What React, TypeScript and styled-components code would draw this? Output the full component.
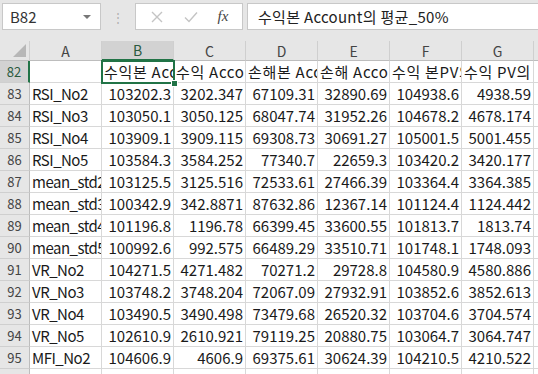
import { Fragment } from 'react';
import styled, { createGlobalStyle, css } from 'styled-components';

const GlobalStyle = createGlobalStyle`
  html, body { margin: 0; padding: 0; background: #ffffff; }
  body {
    font-family: "Noto Sans CJK KR", "Noto Sans", sans-serif;
    overflow: hidden;
  }
`

const Page = styled.div`
  width: 538px;
  height: 374px;
  overflow: hidden;
  background: #e6e6e6;
`

const FormulaBar = styled.div`
  display: flex;
  align-items: center;
  height: 41px;
  padding: 3px 0 11px 2px;
  box-sizing: border-box;
`

const NameBox = styled.div`
  width: 99px;
  height: 27px;
  box-sizing: border-box;
  background: #ffffff;
  border: 1px solid #c8c8c8;
  display: flex;
  align-items: center;
  padding-left: 7px;
  font-size: 15px;
  color: #333;
`

const DropArrow = styled.span`
  margin-left: auto;
  margin-right: 9px;
  width: 0;
  height: 0;
  border-left: 4px solid transparent;
  border-right: 4px solid transparent;
  border-top: 4px solid #777;
`

const Grip = styled.div`
  width: 34px;
  display: flex;
  justify-content: center;
  color: #b0b0b0;
  font-size: 12px;
  line-height: 1;
`

const FxBox = styled.div`
  width: 108px;
  height: 27px;
  box-sizing: border-box;
  background: #ffffff;
  border: 1px solid #c8c8c8;
  display: flex;
  align-items: center;
  justify-content: space-around;
  padding: 0 4px;
`

const Fx = styled.span`
  font-family: "Liberation Serif", serif;
  font-style: italic;
  font-size: 15px;
  color: #444;
`

const FormulaInput = styled.div`
  margin-left: 4px;
  flex: 1;
  height: 27px;
  box-sizing: border-box;
  background: #ffffff;
  border: 1px solid #c8c8c8;
  border-right: none;
  display: flex;
  align-items: center;
  padding-left: 10px;
  font-size: 15px;
  color: #222;
  white-space: nowrap;
  letter-spacing: 0.3px;
`

const Sheet = styled.div`
  position: relative;
  display: grid;
  grid-template-columns: 30px repeat(7, 72px) 1fr;
  grid-template-rows: 20px repeat(15, 22px);
  background: #ffffff;
`

const Corner = styled.div`
  position: relative;
  background: #e6e6e6;
  border-right: 1px solid #cfcfcf;
  border-bottom: 1px solid #bdbdbd;
  &::after {
    content: '';
    position: absolute;
    right: 3px;
    bottom: 3px;
    width: 0;
    height: 0;
    border-left: 13px solid transparent;
    border-bottom: 13px solid #b7b7b7;
  }
`

const ColHead = styled.div<{ $sel?: boolean }>`
  background: #e6e6e6;
  border-right: 1px solid #cfcfcf;
  border-bottom: 1px solid #bdbdbd;
  display: flex;
  align-items: center;
  justify-content: center;
  font-size: 14px;
  color: #444;
  ${(p) => p.$sel && css`
    background: #d2d2d2;
    border-bottom: 2px solid #217346;
    color: #2a5a3e;
  `}
`

const RowHead = styled.div<{ $sel?: boolean }>`
  background: #e6e6e6;
  border-right: 1px solid #bdbdbd;
  border-bottom: 1px solid #cfcfcf;
  display: flex;
  align-items: center;
  justify-content: center;
  font-size: 13px;
  color: #444;
  ${(p) => p.$sel && css`
    background: #d2d2d2;
    border-right: 2px solid #217346;
    color: #2a5a3e;
  `}
`

type Kind = 'text' | 'num' | 'head'

const spacing: Record<Kind, string> = { text: '-0.5px', num: '0', head: '0.7px' }

const Cell = styled.div<{ $kind?: Kind }>`
  border-right: 1px solid #d8d8d8;
  border-bottom: 1px solid #d8d8d8;
  font-size: 15px;
  line-height: 21px;
  color: #1a1a1a;
  padding: 0 2px;
  white-space: nowrap;
  overflow: hidden;
  text-align: ${(p) => (p.$kind === 'num' ? 'right' : 'left')};
  letter-spacing: ${(p) => spacing[p.$kind ?? 'text']};
`

// B82 is the active cell: a green frame with the fill handle drawn over the grid
const Selection = styled.div`
  position: absolute;
  left: 101px;
  top: 19px;
  width: 74px;
  height: 24px;
  box-sizing: border-box;
  border: 2px solid #217346;
  pointer-events: none;
  &::after {
    content: '';
    position: absolute;
    right: -5px;
    bottom: -5px;
    width: 5px;
    height: 5px;
    background: #217346;
    border: 1px solid #ffffff;
  }
`

const cols = ['A', 'B', 'C', 'D', 'E', 'F', 'G', '']

const headers = [
  '',
  '수익본 Account의 평균_50%',
  '수익 Account의 평균',
  '손해본 Account의 평균',
  '손해 Account의 평균',
  '수익 본PV의 평균',
  '수익 PV의 평균',
]

const rows: string[][] = [
  ['RSI_No2', '103202.3', '3202.347', '67109.31', '32890.69', '104938.6', '4938.59'],
  ['RSI_No3', '103050.1', '3050.125', '68047.74', '31952.26', '104678.2', '4678.174'],
  ['RSI_No4', '103909.1', '3909.115', '69308.73', '30691.27', '105001.5', '5001.455'],
  ['RSI_No5', '103584.3', '3584.252', '77340.7', '22659.3', '103420.2', '3420.177'],
  ['mean_std2', '103125.5', '3125.516', '72533.61', '27466.39', '103364.4', '3364.385'],
  ['mean_std3', '100342.9', '342.8871', '87632.86', '12367.14', '101124.4', '1124.442'],
  ['mean_std4', '101196.8', '1196.78', '66399.45', '33600.55', '101813.7', '1813.74'],
  ['mean_std5', '100992.6', '992.575', '66489.29', '33510.71', '101748.1', '1748.093'],
  ['VR_No2', '104271.5', '4271.482', '70271.2', '29728.8', '104580.9', '4580.886'],
  ['VR_No3', '103748.2', '3748.204', '72067.09', '27932.91', '103852.6', '3852.613'],
  ['VR_No4', '103490.5', '3490.498', '73479.68', '26520.32', '103704.6', '3704.574'],
  ['VR_No5', '102610.9', '2610.921', '79119.25', '20880.75', '103064.7', '3064.747'],
  ['MFI_No2', '104606.9', '4606.9', '69375.61', '30624.39', '104210.5', '4210.522'],
  ['', '', '', '', '', '', ''],
]

export default function App() {
  return (
    <Page>
      <GlobalStyle />
      <FormulaBar>
        <NameBox>
          B82
          <DropArrow />
        </NameBox>
        <Grip>⋮</Grip>
        <FxBox>
          <svg width="14" height="14" viewBox="0 0 14 14">
            <path d="M2 2 L12 12 M12 2 L2 12" stroke="#c4c4c4" strokeWidth="1.4" />
          </svg>
          <svg width="16" height="14" viewBox="0 0 16 14">
            <path d="M2 7.5 L6 11.5 L14 2.5" stroke="#c4c4c4" strokeWidth="1.4" fill="none" />
          </svg>
          <Fx>fx</Fx>
        </FxBox>
        <FormulaInput>수익본 Account의 평균_50%</FormulaInput>
      </FormulaBar>
      <Sheet>
        <Corner />
        {cols.map((c, i) => (
          <ColHead key={i} $sel={c === 'B'}>{c}</ColHead>
        ))}
        <RowHead $sel>82</RowHead>
        {headers.map((h, i) => (
          <Cell key={i} $kind="head">{h}</Cell>
        ))}
        <Cell />
        {rows.map((r, ri) => (
          <Fragment key={ri}>
            <RowHead>{ri + 83}</RowHead>
            {r.map((v, ci) => (
              <Cell key={ci} $kind={ci > 0 ? 'num' : 'text'}>{v}</Cell>
            ))}
            <Cell />
          </Fragment>
        ))}
        <Selection />
      </Sheet>
    </Page>
  )
}
